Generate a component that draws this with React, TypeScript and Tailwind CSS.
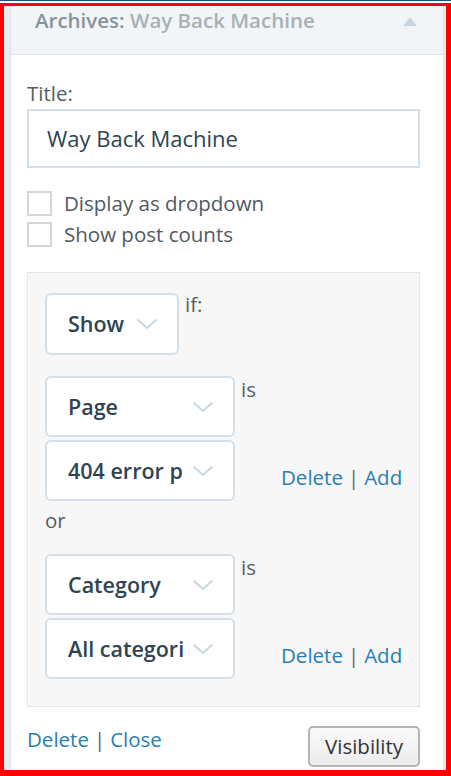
import React from "react";

const font = { fontFamily: '"Open Sans", "Noto Sans", sans-serif' };

function Chevron() {
  return (
    <svg width="22" height="12" viewBox="0 0 22 12" fill="none" className="shrink-0">
      <path d="M1.5 1.5 L11 10 L20.5 1.5" stroke="#c8d7e1" strokeWidth="2" />
    </svg>
  );
}

function Select({ label, w, h = "h-[61px]" }: { label: string; w: string; h?: string }) {
  return (
    <div
      className={`${w} ${h} shrink-0 bg-white border-2 border-[#d3e0ea] rounded-[6px] flex items-center pl-[21px] pr-[19px] overflow-hidden`}
    >
      <span className="min-w-0 text-[21.5px] font-semibold text-[#2e4453] whitespace-nowrap overflow-hidden flex-1 leading-[30px] mr-[9px]">
        {label}
      </span>
      <Chevron />
    </div>
  );
}

function Links({ a, b }: { a: string; b: string }) {
  return (
    <div className="flex items-center text-[20.5px] leading-[26px] whitespace-nowrap">
      <span className="text-[#2a7fb2]">{a}</span>
      <span className="text-[#5b6770] mx-[5px]">|</span>
      <span className="text-[#2a7fb2]">{b}</span>
    </div>
  );
}

export default function App() {
  return (
    <div className="w-[451px] h-[776px] bg-white flex flex-col overflow-hidden" style={font}>
      <div className="h-[1px] bg-[#1b4f7c]" />
      <div className="h-[2px] bg-white" />
      <div className="flex-1 min-h-0 border-[#ff0000] border-t-[3px] border-l-[4px] border-r-[5px] border-b-[6px] bg-[#e9eef3] pl-[6px] pr-[2px] flex">
        <div className="flex-1 min-w-0 bg-white border-x border-[#dde3e8] flex flex-col">
          <div className="h-[49px] shrink-0 bg-[#f2f5f8] border-b border-[#dde3e8] flex items-start pl-[24px] pr-[24px]">
            <div className="flex-1 text-[20.5px] font-semibold leading-[28px]">
              <span className="text-[#88939b]">Archives:</span>
              <span className="text-[#a8b0b6]"> Way Back Machine</span>
            </div>
            <svg width="14" height="9" viewBox="0 0 14 9" className="mt-[11px] mr-[2px]">
              <path d="M7 0 L14 9 L0 9 Z" fill="#c8d5df" />
            </svg>
          </div>
          <div className="flex-1 min-w-0 pl-[16px] pr-[23px] flex flex-col">
            <div className="mt-[24px] text-[20.5px] text-[#555d66] leading-[28px]">Title:</div>
            <div className="mt-[2px] h-[59px] border-2 border-[#d3e0ea] flex items-center pl-[18px] text-[22px] text-[#2e4453]">
              Way Back Machine
            </div>
            <div className="mt-[23px] flex flex-col gap-[6px]">
              <div className="flex items-center">
                <div className="w-[25px] h-[25px] border-2 border-[#d3d7da] bg-white" />
                <span className="ml-[12px] text-[20.5px] text-[#4f5a63] leading-[25px]">Display as dropdown</span>
              </div>
              <div className="flex items-center">
                <div className="w-[25px] h-[25px] border-2 border-[#d3d7da] bg-white" />
                <span className="ml-[12px] text-[20.5px] text-[#4f5a63] leading-[25px]">Show post counts</span>
              </div>
            </div>
            <div className="mt-[25px] h-[435px] min-w-0 bg-[#f7f7f7] border border-[#e4e6e8] pl-[17px] pr-[17px] pt-[20px] flex flex-col">
              <div className="flex items-start">
                <Select label="Show" w="w-[134px]" h="h-[62px]" />
                <span className="ml-[6px] text-[20.5px] text-[#555d66] leading-[26px] -mt-[2px]">if:</span>
              </div>
              <div className="mt-[21px] flex items-start">
                <div className="flex flex-col gap-[3px]">
                  <Select label="Page" w="w-[190px]" />
                  <Select label="404 error page" w="w-[190px]" />
                </div>
                <div className="flex flex-col justify-between self-stretch ml-[6px] pb-[11px]">
                  <span className="text-[20.5px] text-[#555d66] leading-[26px]">is</span>
                  <div className="ml-[40px]"><Links a="Delete" b="Add" /></div>
                </div>
              </div>
              <div className="mt-[6px] text-[20.5px] text-[#555d66] leading-[26px]">or</div>
              <div className="mt-[21px] flex items-start">
                <div className="flex flex-col gap-[3px]">
                  <Select label="Category" w="w-[190px]" />
                  <Select label="All categories" w="w-[190px]" />
                </div>
                <div className="flex flex-col justify-between self-stretch ml-[6px] pb-[11px]">
                  <span className="text-[20.5px] text-[#555d66] leading-[26px]">is</span>
                  <div className="ml-[40px]"><Links a="Delete" b="Add" /></div>
                </div>
              </div>
            </div>
            <div className="mt-[19px] flex items-start justify-between">
              <Links a="Delete" b="Close" />
              <div className="w-[112px] h-[41px] rounded-[5px] border-2 border-[#b4b4b4] bg-gradient-to-b from-[#fafafa] to-[#ececec] flex items-center justify-center text-[20.5px] text-[#333]">
                Visibility
              </div>
            </div>
          </div>
        </div>
      </div>
    </div>
  );
}
